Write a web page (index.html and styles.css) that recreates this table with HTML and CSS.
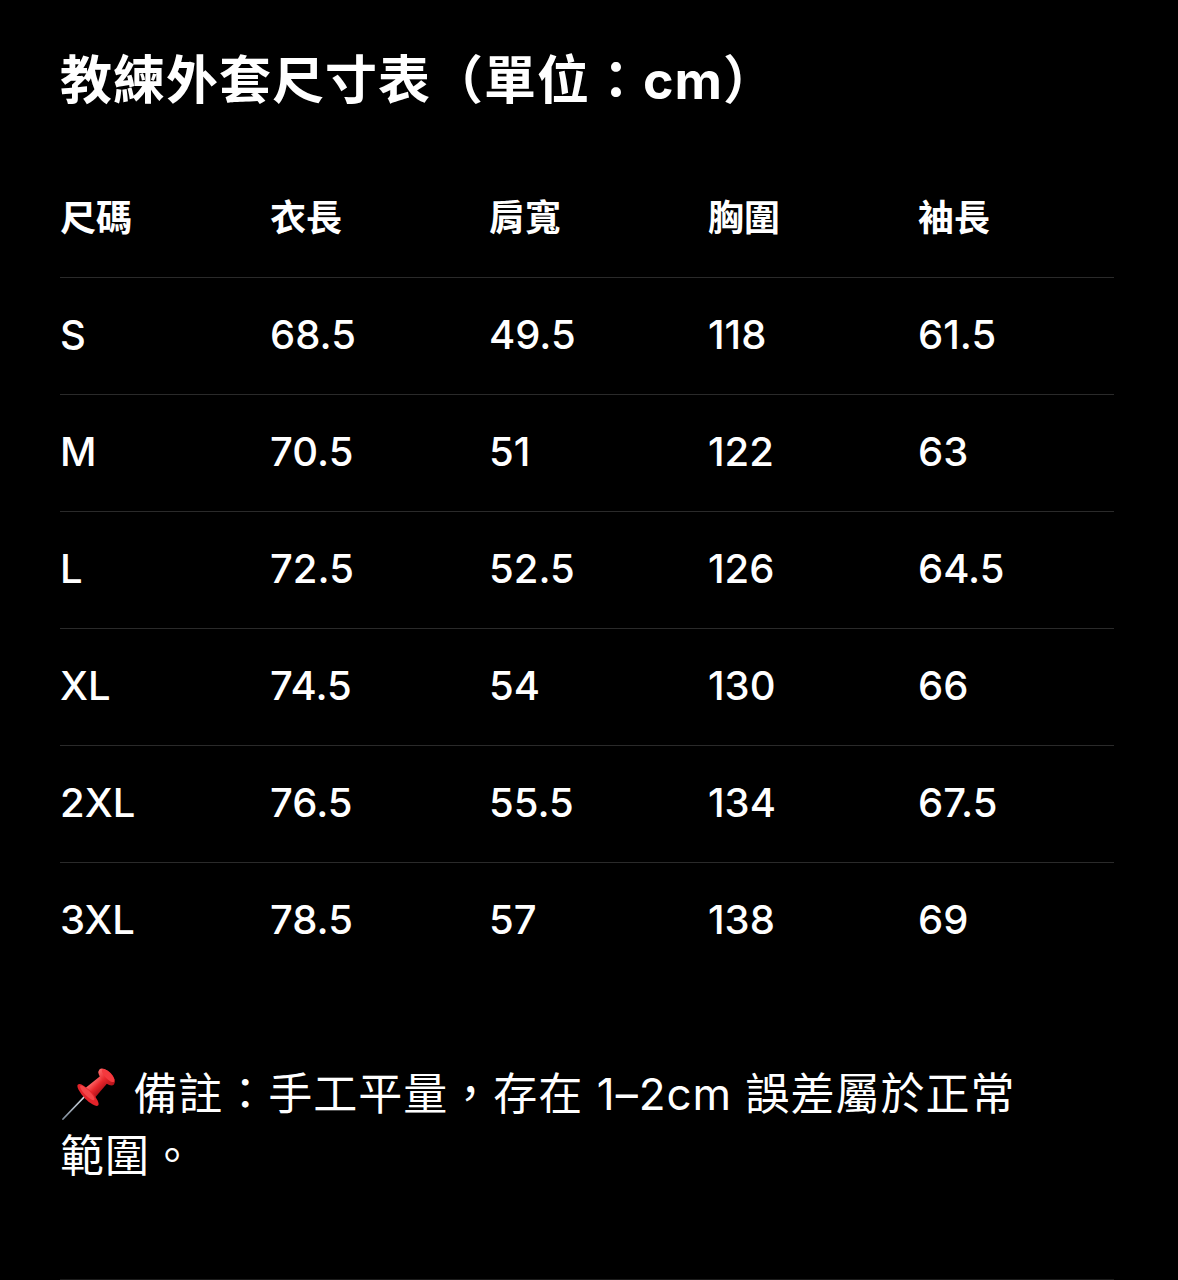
FILE: index.html
```html
<!DOCTYPE html>
<html lang="zh-Hant-TW">
<head>
<meta charset="utf-8">
<title>教練外套尺寸表</title>
<link rel="stylesheet" href="styles.css">
</head>
<body>
<main class="page">
  <h1 class="title">教練外套尺寸表（單位：cm）</h1>

  <div class="table">
    <div class="row head">
      <div class="cell">尺碼</div>
      <div class="cell">衣長</div>
      <div class="cell">肩寬</div>
      <div class="cell">胸圍</div>
      <div class="cell">袖長</div>
    </div>
    <div class="row">
      <div class="cell">S</div><div class="cell">68.5</div><div class="cell">49.5</div><div class="cell">118</div><div class="cell">61.5</div>
    </div>
    <div class="row">
      <div class="cell">M</div><div class="cell">70.5</div><div class="cell">51</div><div class="cell">122</div><div class="cell">63</div>
    </div>
    <div class="row">
      <div class="cell">L</div><div class="cell">72.5</div><div class="cell">52.5</div><div class="cell">126</div><div class="cell">64.5</div>
    </div>
    <div class="row">
      <div class="cell">XL</div><div class="cell">74.5</div><div class="cell">54</div><div class="cell">130</div><div class="cell">66</div>
    </div>
    <div class="row">
      <div class="cell">2XL</div><div class="cell">76.5</div><div class="cell">55.5</div><div class="cell">134</div><div class="cell">67.5</div>
    </div>
    <div class="row last">
      <div class="cell">3XL</div><div class="cell">78.5</div><div class="cell">57</div><div class="cell">138</div><div class="cell">69</div>
    </div>
  </div>

  <p class="note"><svg class="pin" viewBox="0 0 70 64" width="70" height="64" aria-hidden="true">
      <defs>
        <linearGradient id="pinBody" x1="0" y1="0" x2="0" y2="1">
          <stop offset="0" stop-color="#ff6a6a"/>
          <stop offset="0.5" stop-color="#e8262b"/>
          <stop offset="1" stop-color="#b0121a"/>
        </linearGradient>
        <linearGradient id="needle" x1="0" y1="0" x2="1" y2="0">
          <stop offset="0" stop-color="#7d8a99"/>
          <stop offset="1" stop-color="#dfe6ee"/>
        </linearGradient>
      </defs>
      <line x1="31" y1="34" x2="7" y2="59" stroke="url(#needle)" stroke-width="1.8" stroke-linecap="round"/>
      <g transform="translate(32,35) rotate(-44)">
        <path d="M1,-7 L22,-5 L22,5 L1,7 Z" fill="url(#pinBody)"/>
        <ellipse cx="0" cy="0" rx="4.5" ry="14.5" fill="#e3232a"/>
        <ellipse cx="1" cy="-2" rx="2.8" ry="10" fill="#ff5b5e" opacity="0.6"/>
        <ellipse cx="26" cy="0" rx="5.5" ry="10.5" fill="url(#pinBody)"/>
        <ellipse cx="28" cy="0" rx="3.2" ry="8.5" fill="#f4393e"/>
      </g>
    </svg> 備註：手工平量，存在 1–2cm 誤差屬於正常<br>範圍。</p>

  <div class="rule"></div>
</main>
</body>
</html>
```

FILE: styles.css
```css
html, body {
  margin: 0;
  padding: 0;
  background: #000;
}

body {
  color: #fff;
  font-family: Inter, "Noto Sans CJK TC", "Noto Sans", sans-serif;
}

.page {
  padding: 50px 64px 0 60px;
}

.title {
  margin: 0;
  font-size: 52px;
  line-height: 62px;
  font-weight: 700;
  letter-spacing: 1px;
}

.table {
  margin-top: 49px;
  width: 1054px;
}

.row {
  display: grid;
  grid-template-columns: 210px 219px 219px 210px 196px;
  align-items: center;
  height: 117px;
  box-sizing: border-box;
  border-bottom: 1px solid #2a2a2a;
  font-size: 40px;
  font-weight: 500;
}

.row.last {
  border-bottom: none;
}

.row.head {
  font-size: 36px;
  font-weight: 700;
  padding-bottom: 4px;
}

.cell {
  padding-bottom: 4px;
}

.note {
  margin: 80px 0 0;
  font-size: 44px;
  line-height: 62px;
  font-weight: 400;
  letter-spacing: 1px;
}

.pin {
  width: 70px;
  height: 64px;
  margin-left: -4px;
  margin-right: -6px;
  vertical-align: -14px;
}

.rule {
  margin-top: 92px;
  width: 1054px;
  height: 1px;
  background: #1c1c1c;
}
```
